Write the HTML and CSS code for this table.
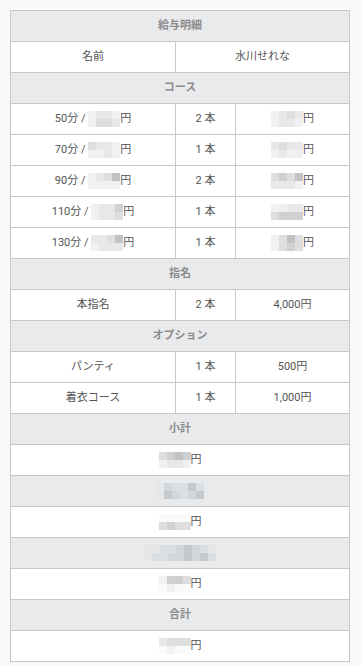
FILE: index.html
```html
<!DOCTYPE html>
<html lang="ja">
<head>
<meta charset="utf-8">
<title>給与明細</title>
<link rel="stylesheet" href="styles.css">
</head>
<body>
<div class="page">
<table class="slip">
  <colgroup><col class="c1"><col class="c2"><col class="c3"></colgroup>
  <tr><th colspan="3">給与明細</th></tr>
  <tr><td>名前</td><td colspan="2">水川せれな</td></tr>
  <tr><th colspan="3">コース</th></tr>
  <tr>
    <td>50分 / <span class="mz w4"><i class="a"></i><i class="b"></i><i class="b"></i><i class="a"></i><i class="a"></i><i class="c"></i><i class="c"></i><i class="b"></i></span>円</td>
    <td>2 本</td>
    <td><span class="mz w4"><i class="a"></i><i class="b"></i><i class="c"></i><i class="b"></i><i class="a"></i><i class="b"></i><i class="b"></i><i class="a"></i></span>円</td>
  </tr>
  <tr>
    <td>70分 / <span class="mz w4"><i class="c"></i><i class="b"></i><i class="b"></i><i class="a"></i><i class="a"></i><i class="a"></i><i class="b"></i><i class="a"></i></span>円</td>
    <td>1 本</td>
    <td><span class="mz w4"><i class="b"></i><i class="c"></i><i class="b"></i><i class="b"></i><i class="a"></i><i class="b"></i><i class="a"></i><i class="a"></i></span>円</td>
  </tr>
  <tr>
    <td>90分 / <span class="mz w4"><i class="a"></i><i class="b"></i><i class="c"></i><i class="e"></i><i class="a"></i><i class="a"></i><i class="a"></i><i class="a"></i></span>円</td>
    <td>2 本</td>
    <td><span class="mz w4"><i class="c"></i><i class="d"></i><i class="c"></i><i class="e"></i><i class="b"></i><i class="b"></i><i class="b"></i><i class="a"></i></span>円</td>
  </tr>
  <tr>
    <td>110分 / <span class="mz w4"><i class="a"></i><i class="b"></i><i class="b"></i><i class="d"></i><i class="a"></i><i class="b"></i><i class="b"></i><i class="c"></i></span>円</td>
    <td>1 本</td>
    <td><span class="mz w4"><i class="a"></i><i class="a"></i><i class="b"></i><i class="b"></i><i class="c"></i><i class="d"></i><i class="d"></i><i class="d"></i></span>円</td>
  </tr>
  <tr>
    <td>130分 / <span class="mz w4"><i class="b"></i><i class="b"></i><i class="c"></i><i class="e"></i><i class="a"></i><i class="b"></i><i class="b"></i><i class="b"></i></span>円</td>
    <td>1 本</td>
    <td><span class="mz w4"><i class="a"></i><i class="c"></i><i class="e"></i><i class="c"></i><i class="a"></i><i class="c"></i><i class="d"></i><i class="c"></i></span>円</td>
  </tr>
  <tr><th colspan="3">指名</th></tr>
  <tr><td>本指名</td><td>2 本</td><td>4,000円</td></tr>
  <tr><th colspan="3">オプション</th></tr>
  <tr><td>パンティ</td><td>1 本</td><td>500円</td></tr>
  <tr><td>着衣コース</td><td>1 本</td><td>1,000円</td></tr>
  <tr><th colspan="3">小計</th></tr>
  <tr><td colspan="3"><span class="mz w4"><i class="c"></i><i class="d"></i><i class="e"></i><i class="d"></i><i class="a"></i><i class="b"></i><i class="b"></i><i class="a"></i></span>円</td></tr>
  <tr><th colspan="3"><span class="mz w6 gr"><i class="a"></i><i class="c"></i><i class="b"></i><i class="b"></i><i class="d"></i><i class="b"></i><i class="a"></i><i class="d"></i><i class="c"></i><i class="b"></i><i class="c"></i><i class="d"></i></span></th></tr>
  <tr><td colspan="3"><span class="mz w4"><i class="f"></i><i class="f"></i><i class="f"></i><i class="f"></i><i class="c"></i><i class="d"></i><i class="c"></i><i class="c"></i></span>円</td></tr>
  <tr><th colspan="3"><span class="mz w9 gr"><i class="a"></i><i class="a"></i><i class="b"></i><i class="b"></i><i class="c"></i><i class="d"></i><i class="c"></i><i class="b"></i><i class="a"></i><i class="a"></i><i class="b"></i><i class="b"></i><i class="c"></i><i class="c"></i><i class="d"></i><i class="c"></i><i class="d"></i><i class="b"></i></span></th></tr>
  <tr><td colspan="3"><span class="mz w4"><i class="a"></i><i class="d"></i><i class="d"></i><i class="c"></i><i class="f"></i><i class="a"></i><i class="f"></i><i class="f"></i></span>円</td></tr>
  <tr><th colspan="3">合計</th></tr>
  <tr><td colspan="3"><span class="mz w4"><i class="b"></i><i class="c"></i><i class="c"></i><i class="c"></i><i class="f"></i><i class="a"></i><i class="f"></i><i class="f"></i></span>円</td></tr>
</table>
</div>
</body>
</html>
```

FILE: styles.css
```css
html, body {
  margin: 0;
  padding: 0;
  background: #f9f9f9;
}
.page {
  padding: 10px 12px 10px 10px;
}
.slip {
  width: 339px;
  table-layout: fixed;
  border-collapse: collapse;
  font-family: Roboto, "Noto Sans CJK JP", sans-serif;
  font-size: 11px;
  color: #555;
}
.c1 { width: 165px; }
.c2 { width: 60px; }
.c3 { width: 114px; }
.slip th, .slip td {
  height: 30px;
  padding: 0;
  border: 1px solid #c8c8c8;
  text-align: center;
  vertical-align: middle;
  line-height: 14px;
  white-space: nowrap;
}
.slip td {
  background: #fff;
}
.slip th {
  background: #e9eaec;
  color: #8c8c8c;
  font-weight: bold;
}
.mz {
  display: inline-grid;
  grid-auto-rows: 8px;
  vertical-align: middle;
  margin-top: -1px;
}
.mz.w4 { grid-template-columns: repeat(4, 8px); }
.mz.w6 { grid-template-columns: repeat(6, 8px); }
.mz.w9 { grid-template-columns: repeat(9, 8px); }
.mz i { display: block; }
.mz .f { background: #fafafa; }
.mz .a { background: #f1f1f1; }
.mz .b { background: #e8e8e8; }
.mz .c { background: #dedede; }
.mz .d { background: #d0d0d0; }
.mz .e { background: #c2c2c2; }
.mz.gr .a { background: #e4e6e8; }
.mz.gr .b { background: #dcdfe1; }
.mz.gr .c { background: #d4d7d9; }
.mz.gr .d { background: #c6c9cb; }
```
